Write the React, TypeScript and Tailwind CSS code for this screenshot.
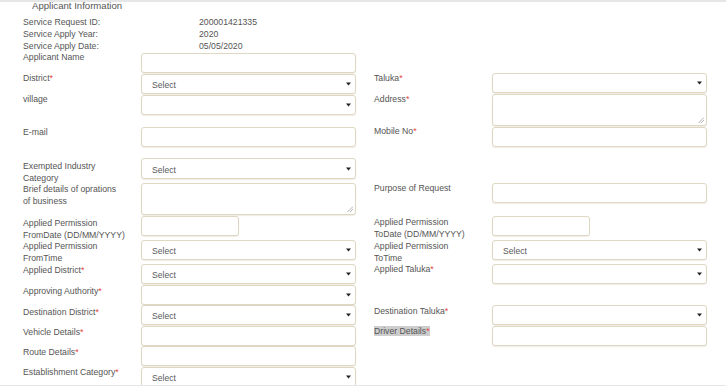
import React from "react";

type Kind = "input" | "select" | "textarea" | "short";
type Ctl = { kind: Kind; text?: string; tall?: boolean };
type Field = {
  label: string[];
  req?: boolean;
  off: number;
  ctl: Ctl;
  ctlOff?: number;
  hl?: boolean;
};
type Row = { h: string; L?: Field; R?: Field };

const offCls: Record<number, string> = {
  [-3]: "-mt-[3px]",
  [-2]: "-mt-[2px]",
  [-1]: "-mt-px",
  0: "mt-0",
  1: "mt-px",
  2: "mt-[2px]",
};

const Arrow = () => (
  <svg width="5" height="4" viewBox="0 0 5 4" className="absolute right-[4px] top-1/2 -translate-y-1/2">
    <polygon points="0,0.5 5,0.5 2.5,3.5" fill="#222" />
  </svg>
);

const Grip = () => (
  <svg width="6" height="6" viewBox="0 0 6 6" className="absolute right-[2px] bottom-[2px]">
    <line x1="6" y1="0.5" x2="0.5" y2="6" stroke="#a0a0a0" strokeWidth="0.8" />
    <line x1="6" y1="3" x2="3" y2="6" stroke="#a0a0a0" strokeWidth="0.8" />
  </svg>
);

const box =
  "relative bg-white border border-[#e0d7c3] rounded-[3px] shadow-[0_1px_1px_rgba(180,165,135,0.2)]";

function Control({ ctl }: { ctl: Ctl }) {
  if (ctl.kind === "textarea") {
    return (
      <div className={`${box} h-[32px] w-[215px]`}>
        <Grip />
      </div>
    );
  }
  if (ctl.kind === "short") {
    return <div className={`${box} h-[20px] w-[98px]`} />;
  }
  if (ctl.kind === "select") {
    return (
      <div className={`${box} ${ctl.tall ? "h-[21px]" : "h-[20px]"} w-[215px] flex items-center pl-[10px] pt-[3px] text-[8.6px] text-[#5a5a5a]`}>
        {ctl.text}
        <Arrow />
      </div>
    );
  }
  return <div className={`${box} h-[20px] w-[215px]`} />;
}

function Label({ f }: { f: Field }) {
  return (
    <div className={`w-[118px] shrink-0 leading-[12px] text-[8.7px] text-[#555] ${offCls[f.off]}`}>
      {f.label.map((l, i) => (
        <div key={i} className="whitespace-nowrap">
          <span className={f.hl ? "bg-[#cdcdcd]" : ""}>
            {l}
            {f.req && i === f.label.length - 1 ? <span className="text-[#e8463f]">*</span> : null}
          </span>
        </div>
      ))}
    </div>
  );
}

function Pair({ f }: { f?: Field }) {
  if (!f) return <div className="w-[333px] shrink-0" />;
  return (
    <div className="w-[333px] shrink-0 flex items-start">
      <Label f={f} />
      <div className={offCls[f.ctlOff ?? 0]}>
        <Control ctl={f.ctl} />
      </div>
    </div>
  );
}

const rows: Row[] = [
  { h: "h-[21px]", L: { label: ["Applicant Name"], off: -2, ctl: { kind: "input" } } },
  {
    h: "h-[21px]",
    L: { label: ["District"], req: true, off: -2, ctl: { kind: "select", text: "Select" } },
    R: { label: ["Taluka"], req: true, off: -2, ctl: { kind: "select", text: "" }, ctlOff: -1 },
  },
  {
    h: "h-[32px]",
    L: { label: ["village"], off: -2, ctl: { kind: "select", text: "" } },
    R: { label: ["Address"], req: true, off: -2, ctl: { kind: "textarea" }, ctlOff: -1 },
  },
  {
    h: "h-[31px]",
    L: { label: ["E-mail"], off: -1, ctl: { kind: "input" } },
    R: { label: ["Mobile No"], req: true, off: -2, ctl: { kind: "input" } },
  },
  {
    h: "h-[25px]",
    L: { label: ["Exempted Industry", "Category"], off: 2, ctl: { kind: "select", text: "Select", tall: true } },
  },
  {
    h: "h-[33px]",
    L: { label: ["Brief details of oprations", "of business"], off: 0, ctl: { kind: "textarea" } },
    R: { label: ["Purpose of Request"], off: -1, ctl: { kind: "input" } },
  },
  {
    h: "h-[24px]",
    L: { label: ["Applied Permission", "FromDate (DD/MM/YYYY)"], off: 1, ctl: { kind: "short" } },
    R: { label: ["Applied Permission", "ToDate (DD/MM/YYYY)"], off: 0, ctl: { kind: "short" } },
  },
  {
    h: "h-[24px]",
    L: { label: ["Applied Permission", "FromTime"], off: 0, ctl: { kind: "select", text: "Select" } },
    R: { label: ["Applied Permission", "ToTime"], off: 0, ctl: { kind: "select", text: "Select" } },
  },
  {
    h: "h-[21px]",
    L: { label: ["Applied District"], req: true, off: 0, ctl: { kind: "select", text: "Select" } },
    R: { label: ["Applied Taluka"], req: true, off: -1, ctl: { kind: "select", text: "" } },
  },
  { h: "h-[20px]", L: { label: ["Approving Authority"], req: true, off: 0, ctl: { kind: "select", text: "" } } },
  {
    h: "h-[21px]",
    L: { label: ["Destination District"], req: true, off: 1, ctl: { kind: "select", text: "Select" } },
    R: { label: ["Destination Taluka"], req: true, off: 0, ctl: { kind: "select", text: "" } },
  },
  {
    h: "h-[20px]",
    L: { label: ["Vehicle Details"], req: true, off: 0, ctl: { kind: "input" } },
    R: { label: ["Driver Details"], req: true, off: -1, ctl: { kind: "input" }, hl: true },
  },
  { h: "h-[21px]", L: { label: ["Route Details"], req: true, off: 0, ctl: { kind: "input" } } },
  {
    h: "h-[21px]",
    L: { label: ["Establishment Category"], req: true, off: -1, ctl: { kind: "select", text: "Select" } },
  },
];

const info: [string, string][] = [
  ["Service Request ID:", "200001421335"],
  ["Service Apply Year:", "2020"],
  ["Service Apply Date:", "05/05/2020"],
];

export default function App() {
  return (
    <div className="w-[726px] h-[386px] overflow-hidden bg-white border-t-2 border-b border-[#e6e6e6] font-['Liberation_Sans',Arial,sans-serif]">
      <div className="-mt-[2px] h-[12px] leading-[12px] pl-[32px] text-[9.6px] text-[#555] whitespace-nowrap">
        Applicant Information
      </div>
      <div className="mt-[4px] pl-[23px]">
        {info.map(([k, v]) => (
          <div key={k} className="flex h-[12px] leading-[12px] text-[8.7px] text-[#555]">
            <div className="w-[176px] shrink-0">{k}</div>
            <div>{v}</div>
          </div>
        ))}
      </div>
      <div className="mt-px pl-[23px] flex flex-col">
        {rows.map((r, i) => (
          <div key={i} className={`${r.h} shrink-0 flex items-start`}>
            <Pair f={r.L} />
            <div className="w-[18px] shrink-0" />
            <Pair f={r.R} />
          </div>
        ))}
      </div>
    </div>
  );
}
